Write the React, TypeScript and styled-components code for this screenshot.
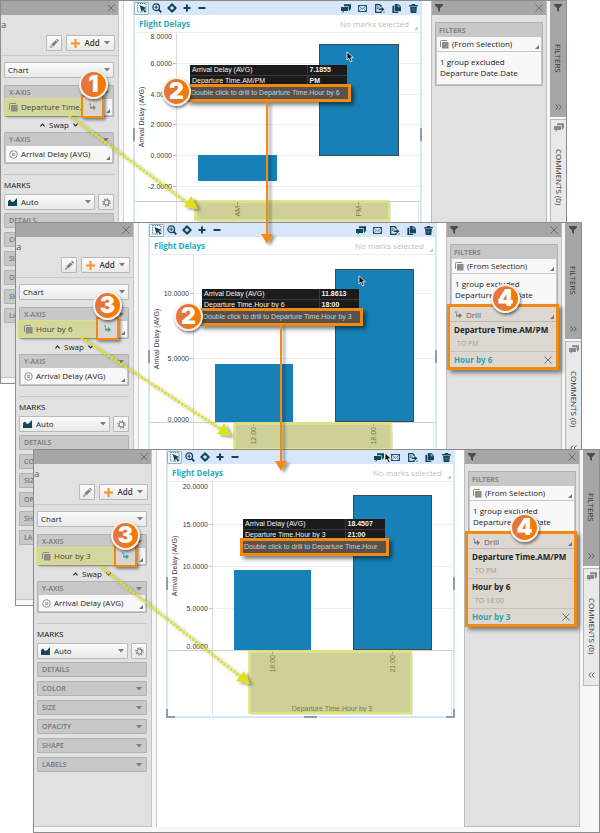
import React from "react";
import styled, { createGlobalStyle, css } from "styled-components";

const UI_FONT = '"Open Sans", "Noto Sans", sans-serif';
const CHART_FONT = '"Liberation Sans", Arial, sans-serif';
const ORANGE = "#f28a12";
const NAVY = "#12465c";
const TEAL = "#2fa3aa";

const GlobalStyle = createGlobalStyle`
  *, *::before, *::after { box-sizing: border-box; }
  body { margin: 0; background: #fff; font-family: ${UI_FONT}; font-size: 8px; line-height: 12px; color: #222; }
  button, select { font: inherit; color: inherit; margin: 0; padding: 0; border: 0; background: none; }
  svg { display: block; flex: none; }
  h2, h3, p, ul { margin: 0; padding: 0; font: inherit; list-style: none; }
`;

/* ---------- stage and windows ---------- */

const Stage = styled.main`
  display: grid;
  min-width: 600px;
  overflow: hidden;
`;

const WindowFrame = styled.section<{ $x: number; $y: number }>`
  grid-area: 1 / 1;
  position: relative;
  align-self: start;
  margin: ${(p) => p.$y}px 0 0 ${(p) => p.$x}px;
  width: calc(100% - 33px);
  height: 384px;
  display: flex;
  background: #f7f7f7;
  border: 1px solid #8c8c8c;
`;

const Arrows = styled.svg`
  grid-area: 1 / 1;
  pointer-events: none;
  z-index: 2;
`;

const PanelHeader = styled.header`
  display: flex;
  align-items: center;
  justify-content: space-between;
  height: 14px;
  padding: 0 3px;
  background: #a6a6a6;
  color: #555;
`;

const IconButton = styled.button`
  display: flex;
  align-items: center;
  justify-content: center;
`;

/* ---------- left panel ---------- */

const SidePanel = styled.aside`
  position: relative;
  width: 118px;
  height: 377px;
  flex: none;
  background: #e1e1e1;
  border-right: 1px solid #c4c4c4;
  border-bottom: 1px solid #c4c4c4;
`;

const PanelTitle = styled.h2`
  height: 20px;
  padding-top: 4px;
  font-size: 9px;
  color: #555;
  text-indent: -3px;
  overflow: hidden;
`;

const Actions = styled.div`
  display: flex;
  justify-content: flex-end;
  gap: 4px;
  height: 21px;
  padding-right: 3px;
  border-bottom: 1px solid #c9c9c9;
`;

const raised = css`
  background: linear-gradient(#fbfbfb, #e9e9e9);
  border: 1px solid #b9b9b9;
  border-radius: 1px;
`;

const SmallButton = styled.button<{ $w: number }>`
  ${raised}
  width: ${(p) => p.$w}px;
  height: 16px;
  display: flex;
  align-items: center;
  justify-content: center;
  gap: 4px;
  color: #333;
  font-weight: 600;
`;

const SelectBox = styled.label`
  ${raised}
  position: relative;
  display: flex;
  align-items: center;
  flex: 1;
  height: 16px;
  padding: 0 3px;
  gap: 4px;
`;

const Select = styled.select`
  appearance: none;
  flex: 1;
  min-width: 0;
  height: 14px;
  line-height: 12px;
`;

const Controls = styled.div`
  display: flex;
  flex-direction: column;
  padding: 6px 4px 0 3px;
`;

const Line = styled.div`
  display: flex;
  gap: 3px;
`;

const Shelf = styled.div<{ $spaced?: boolean }>`
  margin-top: ${(p) => (p.$spaced ? 7 : 0)}px;
  background: #c8c8c8;
  border: 1px solid #b2b2b2;
  border-radius: 1px;
  padding: 0 1px 1px;
`;

const ShelfHeader = styled.button`
  display: flex;
  width: 100%;
  height: 13px;
  padding: 0 3px;
  align-items: center;
  justify-content: space-between;
  font-weight: 600;
  color: #777;
  font-size: 7px;
`;

const ShelfRow = styled.div`
  position: relative;
  display: flex;
  height: 16px;
  background: #f8f8f8;
`;

const FieldButton = styled.button<{ $marked?: boolean }>`
  display: flex;
  align-items: center;
  gap: 3px;
  padding-left: 3px;
  flex: 1;
  min-width: 0;
  white-space: nowrap;
  color: #222;
  ${(p) =>
    p.$marked &&
    css`
      margin-left: -2px;
      padding-left: 5px;
      color: #454822;
      background: #d4d69f;
      box-shadow: 0 0 0 1px #dfe17e, 2px 2px 3px rgba(0, 0, 0, 0.35);
    `}
`;

const DrillButton = styled.button`
  display: flex;
  align-items: center;
  justify-content: center;
  width: 23px;
  height: 23px;
  margin: -4px 8px 0 1px;
  background: #d9d5d1;
  border: 2px solid ${ORANGE};
  box-shadow: 2px 2px 3px rgba(0, 0, 0, 0.45);
`;

const SwapButton = styled.button`
  display: flex;
  align-items: center;
  justify-content: center;
  gap: 4px;
  height: 15px;
`;

const Divider = styled.hr`
  width: 100%;
  height: 1px;
  margin: 10px 0 4px;
  border: 0;
  background: #c6c6c6;
`;

const SectionTitle = styled.h3`
  height: 15px;
  color: #111;
`;

const MarkButton = styled.button`
  display: flex;
  align-items: center;
  justify-content: space-between;
  height: 15px;
  padding: 0 4px;
  background: #c8c8c8;
  border: 1px solid #b2b2b2;
  border-radius: 1px;
  font-size: 7px;
  font-weight: 600;
  color: #777;
`;

const MarkList = styled.div`
  display: flex;
  flex-direction: column;
  gap: 4px;
  padding-top: 3px;
`;

const Corner = styled.span<{ $tone?: string }>`
  position: absolute;
  right: 2px;
  bottom: 2px;
  border: 2px solid transparent;
  border-right-color: ${(p) => p.$tone || "#777"};
  border-bottom-color: ${(p) => p.$tone || "#777"};
`;

/* ---------- centre ---------- */

const Center = styled.div`
  flex: 1;
  min-width: 0;
  height: 377px;
  margin-left: 4px;
  padding: 0 9px;
  border-left: 1px solid #cfcfcf;
  background: #fff;
`;

const ChartCard = styled.div`
  position: relative;
  height: 268px;
  border: 2px solid #d8e6f9;
  border-top: 0;
`;

const Toolbar = styled.div`
  display: flex;
  align-items: center;
  height: 14px;
  margin: 0 -2px;
  padding: 0 1px;
  background: #d8e6f9;
  color: ${NAVY};
`;

const ToolButton = styled.button<{ $active?: boolean }>`
  display: flex;
  align-items: center;
  justify-content: center;
  width: 15px;
  height: 13px;
  ${(p) => p.$active && "background:#f4f8fd;border:1px solid #8fb6c2;border-radius:1px;"}
`;

const ToolGap = styled.span`
  flex: 1;
`;

const RightTools = styled.div`
  display: flex;
  gap: 2px;
`;

const ChartHead = styled.div`
  display: flex;
  align-items: center;
  justify-content: space-between;
  height: 18px;
  padding: 1px 11px 0 4px;
  border-bottom: 1px solid #ececec;
  position: relative;
`;

const ChartTitle = styled.h3`
  font-weight: 700;
  color: #27a9b8;
`;

const Hint = styled.span`
  color: #bdbdbd;
`;

const Plot = styled.svg`
  font-family: ${CHART_FONT};
  font-size: 7px;
  fill: #3a3a3a;
`;

const Handle = styled.span<{ $at: "left" | "right" | "bottom" | "bl" | "br" }>`
  position: absolute;
  ${(p) =>
    ({
      left: "left:-2px;top:127px;width:2px;height:13px;background:#8c9fb2;",
      right: "right:-2px;top:127px;width:2px;height:13px;background:#8c9fb2;",
      bottom: "left:50%;margin-left:-7px;bottom:-2px;width:13px;height:2px;background:#8c9fb2;",
      bl: "left:-2px;bottom:-2px;width:9px;height:9px;border:solid #8c9fb2;border-width:0 0 2px 2px;",
      br: "right:-2px;bottom:-2px;width:9px;height:9px;border:solid #8c9fb2;border-width:0 2px 2px 0;",
    })[p.$at]}
`;

const Tip = styled.div<{ $x: number; $y: number; $w: number }>`
  position: absolute;
  left: ${(p) => p.$x}px;
  top: ${(p) => p.$y}px;
  width: ${(p) => p.$w}px;
  font: 7px/10px ${CHART_FONT};
  color: #f2f2f2;
`;

const TipTable = styled.table`
  width: 100%;
  border-collapse: collapse;
  background: #1b1b1b;
  th, td { height: 10px; padding: 0 2px; font-weight: 400; text-align: left; white-space: nowrap; border-bottom: 1px solid #3a3a3a; }
  td { width: 40px; font-weight: 700; border-left: 1px solid #3a3a3a; }
`;

const TipHint = styled.p`
  margin: -3px -4px 0 -3px;
  height: 18px;
  padding: 1px 0 0 1px;
  line-height: 10px;
  white-space: nowrap;
  color: #d0cbc6;
  background: #57524e;
  border: 3px solid ${ORANGE};
  box-shadow: 3px 3px 4px rgba(0, 0, 0, 0.5);
  position: relative;
`;

const PointerSvg = styled.svg<{ $x: number; $y: number }>`
  position: absolute;
  left: ${(p) => p.$x}px;
  top: ${(p) => p.$y}px;
`;

const StepBadge = styled.span<{ $x: number; $y: number }>`
  position: absolute;
  z-index: 1;
  left: ${(p) => p.$x}px;
  top: ${(p) => p.$y}px;
  width: 29px;
  height: 29px;
  border-radius: 50%;
  border: 2px solid #f7efe9;
  background: linear-gradient(100deg, #e5763a 0 48%, #f27808 60%);
  box-shadow: 1px 2px 3px rgba(0, 0, 0, 0.5);
  color: #fff;
  font: 900 23px/25px Inter, ${CHART_FONT};
  text-align: center;
`;

/* ---------- right ---------- */

const FilterPanel = styled.aside`
  position: relative;
  width: 116px;
  height: 377px;
  flex: none;
  background: #e1e1e1;
  border: 1px solid #bdbdbd;
  border-top: 0;
`;

const FilterGroup = styled.div`
  margin: 7px 3px 0;
  padding: 0 1px 1px;
  height: 64px;
  background: #c8c8c8;
  border: 1px solid #b2b2b2;
`;

const FilterCaption = styled.h3`
  height: 14px;
  padding: 2px 2px 0;
  line-height: 11px;
  font-size: 7px;
  font-weight: 700;
  color: #858585;
`;

const FilterField = styled.button`
  position: relative;
  display: flex;
  align-items: center;
  gap: 3px;
  width: 100%;
  height: 15px;
  padding: 0 3px;
  background: #f8f8f8;
  border-bottom: 1px solid #c9c9c9;
`;

const FilterText = styled.p`
  height: 32px;
  padding: 4px 3px 0;
  line-height: 11px;
  background: #f8f8f8;
`;

const DrillPath = styled.div`
  position: relative;
  margin: -4px 2px 0 0;
  border: 3px solid ${ORANGE};
  background: #ddd7d1;
  box-shadow: 3px 3px 4px rgba(0, 0, 0, 0.45);
`;

const DrillHead = styled.button`
  position: relative;
  display: flex;
  align-items: center;
  gap: 4px;
  width: 100%;
  height: 15px;
  padding: 1px 5px 0;
  border-bottom: 1px solid #bdb8b3;
  color: #5c5c5c;
`;

const DrillStep = styled.div`
  height: 30px;
  padding: 2px 4px 0;
  border-bottom: 1px solid #c6c1bc;
`;

const StepName = styled.p`
  font-weight: 700;
  white-space: nowrap;
`;

const StepValue = styled.p`
  padding: 2px 3px 0;
  font-size: 7px;
  color: #a09b96;
`;

const DrillCurrent = styled.div`
  display: flex;
  align-items: center;
  justify-content: space-between;
  height: 15px;
  padding: 0 4px;
  font-weight: 700;
  color: ${TEAL};
`;

const Tabs = styled.nav`
  display: flex;
  flex-direction: column;
  gap: 2px;
  width: 16px;
  margin-left: 3px;
  flex: none;
`;

const Tab = styled.button<{ $on?: boolean }>`
  display: flex;
  flex-direction: column;
  align-items: center;
  justify-content: space-between;
  width: 16px;
  height: ${(p) => (p.$on ? 116 : 118)}px;
  padding: 3px 0 7px;
  color: #555;
  background: ${(p) => (p.$on ? "#a6a6a6" : "#e9e9e9")};
  ${(p) => !p.$on && "border:1px solid #b9b9b9;border-right:0;"}
`;

const TabText = styled.span`
  writing-mode: vertical-rl;
  white-space: nowrap;
  line-height: 12px;
  color: #333;
`;

/* ---------- icons ---------- */

const Close = () => (
  <svg width="8" height="8" viewBox="0 0 8 8" fill="none" stroke="#666" strokeWidth=".9"><path d="M.5.5l7 7M7.500.5l-7 7" /></svg>
);
const Caret = () => (
  <svg width="6" height="4" viewBox="0 0 6 4" fill="#7c7c7c"><path d="M0 0h6L3 3.600z" /></svg>
);
const Funnel = () => (
  <svg width="8" height="8" viewBox="0 0 8 8" fill="#4d4d4d"><path d="M0 0h8v1.200L5 4.200V8L3 6.600V4.200L0 1.200z" /></svg>
);
const Chevron = ({ up }: { up?: boolean }) => (
  <svg width="5" height="4" viewBox="0 0 5 4" fill="none" stroke="#222" strokeWidth="1.100"><path d={up ? "M.4 3.400L2.500 1l2.100 2.400" : "M.4.6L2.500 3 4.600.6"} /></svg>
);
const DoubleChevron = ({ left }: { left?: boolean }) => (
  <svg width="7" height="6" viewBox="0 0 7 6" fill="none" stroke="#555" strokeWidth=".9"><path d={left ? "M3.200.4L.8 3l2.400 2.600M6.400.4L4 3l2.400 2.600" : "M.6.4L3 3 .6 5.600M3.800.4L6.200 3 3.800 5.600"} /></svg>
);
const Pencil = () => (
  <svg width="9" height="9" viewBox="0 0 9 9" fill="#808080"><path d="M0 9l.8-2.800 1.900 1.900zM1.300 5.600L5.600 1.300l2 2-4.300 4.300zM6.100.8l.6-.6c.4-.3.7-.2 1 0l1 1c.3.4.2.8 0 1l-.6.6z" /></svg>
);
const OrangePlus = () => (
  <svg width="9" height="9" viewBox="0 0 9 9" fill="#f7941e"><path d="M3.500 0h2v3.500H9v2H5.500V9h-2V5.500H0v-2h3.500z" /></svg>
);
const Stack = () => (
  <svg width="9" height="9" viewBox="0 0 9 9"><path d="M.5 7V1.500a1 1 0 0 1 1-1H7" fill="none" stroke="#8a8a80" /><rect x="2" y="2" width="6.500" height="6.500" rx=".6" fill="#8a8a80" /><path d="M3.300 3.800h4M3.300 5.300h4M3.300 6.800h4" stroke="#a6a69c" strokeWidth=".4" /></svg>
);
const Measure = () => (
  <svg width="9" height="9" viewBox="0 0 9 9" fill="none" stroke="#777" strokeWidth=".8"><circle cx="4.500" cy="4.500" r="3.800" /><path d="M2.800 3.800h3.400M2.800 5.300h3.400" /></svg>
);
const DrillIcon = ({ color = "#777" }: { color?: string }) => (
  <svg width="7" height="8" viewBox="0 0 7 8" fill={color}><path d="M0 .5h1.700v3.200h2.400V1.900L7 4.600 4.100 7.400V5.400H1V1.600H0z" /></svg>
);
const AreaIcon = () => (
  <svg width="9" height="8" viewBox="0 0 9 8" fill={NAVY}><path d="M0 8V3l2-1.500L4 4l2-.8L9 0v8z" /></svg>
);
const Gear = () => (
  <svg width="9" height="9" viewBox="0 0 10 10" fill="none" stroke="#808080"><circle cx="5" cy="5" r="2.700" strokeWidth="1.200" /><circle cx="5" cy="5" r="4" strokeWidth="1.400" strokeDasharray="1.570 1.570" /></svg>
);
const SelectTool = () => (
  <svg width="10" height="10" viewBox="0 0 10 10"><rect x=".6" y=".6" width="8.400" height="8.400" fill="none" stroke={NAVY} strokeWidth=".8" strokeDasharray="1.200 1" /><path d="M2.500 2l7 3-2.500.9 2.300 2.700-1.200 1-2.300-2.700-1.200 2.200z" fill={NAVY} /></svg>
);
const ZoomTool = () => (
  <svg width="10" height="10" viewBox="0 0 10 10" fill="none" stroke={NAVY}><circle cx="4.200" cy="4.200" r="3.300" strokeWidth="1.300" /><path d="M6.500 6.500L9.300 9.300" strokeWidth="1.800" /><path d="M2.500 4.200h3.400M4.200 2.500v3.400" strokeWidth="1" /></svg>
);
const PanTool = () => (
  <svg width="10" height="10" viewBox="0 0 10 10"><circle cx="5" cy="5" r="2.700" fill="none" stroke={NAVY} strokeWidth="1.800" /><path d="M5 0l2 2H3zM5 10l2-2H3zM0 5l2-2v4zM10 5L8 3v4z" fill={NAVY} /></svg>
);
const PlusTool = () => (
  <svg width="8" height="8" viewBox="0 0 8 8" fill={NAVY}><path d="M3 .5h2V3h2.500v2H5v2.500H3V5H.5V3H3z" /></svg>
);
const MinusTool = () => (
  <svg width="8" height="8" viewBox="0 0 8 8" fill={NAVY}><path d="M.5 3h7v2h-7z" /></svg>
);
const Chat = ({ color = NAVY }: { color?: string }) => (
  <svg width="10" height="9" viewBox="0 0 10 9" fill={color}><path d="M3 .3h7v5h-.8L8.700 7l-1-1.600V2.300H3z" /><path d="M0 2.900h7v4.200H3.200L1.700 9V7.100H0z" /></svg>
);
const Mail = () => (
  <svg width="9" height="7" viewBox="0 0 9 7" fill="none" stroke={NAVY} strokeWidth=".9"><rect x=".5" y=".5" width="8" height="6" /><path d="M.5.8l4 3.200 4-3.200M.6 6.300l2.800-3M8.400 6.300l-2.800-3" strokeWidth=".6" /></svg>
);
const Export = () => (
  <svg width="10" height="9" viewBox="0 0 10 9"><path d="M6 3V2L4.600.6H.7v7.800H6V7" fill="none" stroke={NAVY} strokeWidth="1.300" /><path d="M2 3h2.500M2 4.500h1" stroke={NAVY} strokeWidth=".8" /><path d="M3.500 4.500h3V2.800l3 2.500-3 2.500V6.100h-3zM8 7.800h2L9 9z" fill={NAVY} /></svg>
);
const Copy = () => (
  <svg width="9" height="9" viewBox="0 0 9 9" fill={NAVY}><path d="M2.800 0h3.500L9 2.400V7.200H2.800z" /><path d="M.4 1.800h1.800v6h4V9H.4z" /><path d="M6 .3v2.500h2.500" fill="none" stroke="#d8e6f9" strokeWidth=".6" /></svg>
);
const Trash = () => (
  <svg width="9" height="9" viewBox="0 0 9 9" fill={NAVY}><path d="M.2 1h2.600V0h3.400v1h2.600v1.500H.2zM1.100 3.100h6.800L7.300 9H1.700z" /><path d="M3.100 4.400v3M4.500 4.400v3M5.900 4.400v3" stroke="#7f9db0" strokeWidth=".4" /></svg>
);

const Pointer = ({ x, y }: { x: number; y: number }) => (
  <PointerSvg $x={x} $y={y} width="9" height="12" viewBox="0 0 9 12">
    <path d="M1 .8v8.200l1.900-1.700 1.500 3.600 1.700-.7-1.500-3.500H7.300z" fill="#111" stroke="#fff" strokeWidth=".8" />
  </PointerSvg>
);

/* ---------- data ---------- */

type Bar = { x: number; y: number; w: number; h: number; picked?: boolean };
type Scene = {
  x: number;
  y: number;
  field: string;
  drillColor: string;
  axisX: number;
  base: number;
  ticks: { y: number; text: string; shift?: number; bare?: boolean }[];
  bars: Bar[];
  cats: { x: number; text: string }[];
  mark: { x: number; y: number; w: number; h: number };
  axisName?: string;
  tip: { x: number; y: number; w: number; label: string; values: [string, string]; hint: string };
  pointer: [number, number];
  badges: { n: number; x: number; y: number }[];
  steps: { name: string; value: string }[];
};

const scenes: Scene[] = [
  {
    x: 0, y: 0, field: "Departure Time....", drillColor: "#888", axisX: 41, base: 168,
    ticks: [
      { y: 3, text: "8.0000", bare: true }, { y: 30, text: "6.0000" }, { y: 61, text: "4.0000" },
      { y: 91, text: "2.0000" }, { y: 122, text: "0.0000" }, { y: 153, text: "-2.0000" },
    ],
    bars: [{ x: 63, y: 122, w: 79, h: 26 }, { x: 184, y: 11, w: 80, h: 112, picked: true }],
    cats: [{ x: 102, text: "AM" }, { x: 223, text: "PM" }],
    mark: { x: 60, y: 168, w: 194, h: 19 },
    tip: { x: 55, y: 64, w: 157, label: "Departure Time.AM/PM", values: ["7.1855", "PM"], hint: "Double click to drill to Departure Time.Hour by 6" },
    pointer: [211, 50],
    badges: [{ n: 1, x: 78, y: 69 }, { n: 2, x: 161, y: 76 }],
    steps: [],
  },
  {
    x: 15, y: 222, field: "Hour by 6", drillColor: TEAL, axisX: 43, base: 167,
    ticks: [{ y: 38, text: "10.0000" }, { y: 103, text: "5.0000" }, { y: 167, text: "0.0000", shift: -3 }],
    bars: [{ x: 65, y: 109, w: 78, h: 58 }, { x: 185, y: 14, w: 79, h: 153, picked: true }],
    cats: [{ x: 103, text: "12:00" }, { x: 223, text: "18:00" }],
    mark: { x: 84, y: 168, w: 157, h: 26 },
    tip: { x: 52, y: 66, w: 157, label: "Departure Time.Hour by 6", values: ["11.8613", "18:00"], hint: "Double click to drill to Departure Time.Hour by 3" },
    pointer: [208, 52],
    badges: [{ n: 3, x: 77, y: 68 }, { n: 2, x: 158, y: 79 }, { n: 4, x: 475, y: 61 }],
    steps: [{ name: "Departure Time.AM/PM", value: "TO PM" }],
  },
  {
    x: 33, y: 449, field: "Hour by 3", drillColor: TEAL, axisX: 44, base: 168,
    ticks: [
      { y: 4, text: "20.0000", bare: true }, { y: 42, text: "15.0000" }, { y: 84, text: "10.0000" },
      { y: 126, text: "5.0000" }, { y: 168, text: "0.0000", shift: -4 },
    ],
    bars: [{ x: 66, y: 88, w: 77, h: 80 }, { x: 185, y: 13, w: 79, h: 155, picked: true }],
    cats: [{ x: 104, text: "18:00" }, { x: 224, text: "21:00" }],
    mark: { x: 81, y: 169, w: 162, h: 62 },
    axisName: "Departure Time.Hour by 3",
    tip: { x: 75, y: 69, w: 142, label: "Departure Time.Hour by 3", values: ["18.4507", "21:00"], hint: "Double click to drill to Departure Time.Hour" },
    pointer: [216, 2],
    badges: [{ n: 3, x: 77, y: 71 }, { n: 4, x: 476, y: 63 }],
    steps: [{ name: "Departure Time.AM/PM", value: "TO PM" }, { name: "Hour by 6", value: "TO 18:00" }],
  },
];

const marks = ["DETAILS", "COLOR", "SIZE", "OPACITY", "SHAPE", "LABELS"];

/* ---------- parts ---------- */

function Config({ scene }: { scene: Scene }) {
  return (
    <SidePanel>
      <PanelHeader>
        <span />
        <IconButton aria-label="Close panel"><Close /></IconButton>
      </PanelHeader>
      <PanelTitle>ta</PanelTitle>
      <Actions>
        <SmallButton $w={16} aria-label="Edit"><Pencil /></SmallButton>
        <SmallButton $w={49}><OrangePlus />Add<Caret /></SmallButton>
      </Actions>
      <Controls>
        <SelectBox>
          <Select aria-label="Visualization"><option>Chart</option></Select>
          <Caret />
        </SelectBox>
        <Shelf $spaced>
          <ShelfHeader>X-AXIS<Caret /></ShelfHeader>
          <ShelfRow>
            <FieldButton $marked><Stack />{scene.field}</FieldButton>
            <DrillButton aria-label="Drill"><DrillIcon color={scene.drillColor} /></DrillButton>
            <Corner />
          </ShelfRow>
        </Shelf>
        <SwapButton><Chevron up />Swap<Chevron /></SwapButton>
        <Shelf>
          <ShelfHeader>Y-AXIS<Caret /></ShelfHeader>
          <ShelfRow>
            <FieldButton><Measure />Arrival Delay (AVG)</FieldButton>
            <Corner />
          </ShelfRow>
        </Shelf>
        <Divider />
        <SectionTitle>MARKS</SectionTitle>
        <Line>
          <SelectBox>
            <AreaIcon />
            <Select aria-label="Mark type"><option>Auto</option></Select>
            <Caret />
          </SelectBox>
          <SmallButton $w={16} aria-label="Mark settings"><Gear /></SmallButton>
        </Line>
        <MarkList>
          {marks.map((m, i) => (
            <MarkButton key={m}>{m}{i > 0 && <Caret />}</MarkButton>
          ))}
        </MarkList>
      </Controls>
    </SidePanel>
  );
}

function Chart({ scene }: { scene: Scene }) {
  const { axisX, base, mark, tip } = scene;
  return (
    <Center>
      <ChartCard>
        <Toolbar>
          <ToolButton $active aria-label="Select"><SelectTool /></ToolButton>
          <ToolButton aria-label="Zoom"><ZoomTool /></ToolButton>
          <ToolButton aria-label="Pan"><PanTool /></ToolButton>
          <ToolButton aria-label="Zoom in"><PlusTool /></ToolButton>
          <ToolButton aria-label="Zoom out"><MinusTool /></ToolButton>
          <ToolGap />
          <RightTools>
            <ToolButton aria-label="Comments"><Chat /></ToolButton>
            <ToolButton aria-label="Mail"><Mail /></ToolButton>
            <ToolButton aria-label="Export"><Export /></ToolButton>
            <ToolButton aria-label="Copy"><Copy /></ToolButton>
            <ToolButton aria-label="Delete"><Trash /></ToolButton>
          </RightTools>
        </Toolbar>
        <ChartHead>
          <ChartTitle>Flight Delays</ChartTitle>
          <Hint>No marks selected</Hint>
          <Corner $tone="#c8c8c8" />
        </ChartHead>
        <Plot width="100%" viewBox="0 0 285 233">
          {scene.ticks.map((t) => (
            <g key={t.text}>
              {!t.bare && <path d={`M${axisX} ${t.y + 0.5}H285`} stroke="#eeeeee" />}
              {!t.bare && <path d={`M${axisX - 3} ${t.y + 0.5}H${axisX}`} stroke="#bbb" />}
              <text x={axisX - 4} y={t.y + 3 + (t.shift || 0)} textAnchor="end">{t.text}</text>
            </g>
          ))}
          <path d={`M${axisX + 0.5} 0V233`} stroke="#dcdcdc" />
          <path d={`M0 ${base + 0.5}H285`} stroke="#cfcfcf" />
          <path d={`M283.500 ${base}V233`} stroke="#e4e4e4" />
          <text transform="translate(9 84) rotate(-90)" textAnchor="middle">Arrival Delay (AVG)</text>
          {scene.bars.map((b) => (
            <rect key={b.x} x={b.x + 0.5} y={b.y + 0.5} width={b.w - 1} height={b.h - 1} fill="#1780b6" stroke={b.picked ? "#3c4b54" : "#1780b6"} />
          ))}
          {scene.cats.map((c) => (
            <g key={c.text}>
              <path d={`M${c.x + 0.5} ${base + 1}v3`} stroke="#999" />
              <text transform={`translate(${c.x + 3} ${base + 5}) rotate(-90)`} textAnchor="end">{c.text}</text>
            </g>
          ))}
          {scene.axisName && <text x="164" y="229" textAnchor="middle">{scene.axisName}</text>}
          <rect x={mark.x + 2} y={mark.y + 2} width={mark.w} height={mark.h} fill="#000" opacity=".1" />
          <rect x={mark.x} y={mark.y} width={mark.w} height={mark.h} fill="#b9bc4c" fillOpacity=".5" stroke="#e2e56c" strokeOpacity=".8" strokeWidth="2" />
        </Plot>
        <Handle $at="left" />
        <Handle $at="right" />
        <Handle $at="bottom" />
        <Handle $at="bl" />
        <Handle $at="br" />
        <Tip $x={tip.x} $y={tip.y} $w={tip.w}>
          <TipTable>
            <tbody>
              <tr><th scope="row">Arrival Delay (AVG)</th><td>{tip.values[0]}</td></tr>
              <tr><th scope="row">{tip.label}</th><td>{tip.values[1]}</td></tr>
            </tbody>
          </TipTable>
          <TipHint>{tip.hint}</TipHint>
        </Tip>
        <Pointer x={scene.pointer[0]} y={scene.pointer[1]} />
      </ChartCard>
    </Center>
  );
}

function Filters({ scene }: { scene: Scene }) {
  return (
    <FilterPanel>
      <PanelHeader>
        <Funnel />
        <IconButton aria-label="Close filters"><Close /></IconButton>
      </PanelHeader>
      <FilterGroup>
        <FilterCaption>FILTERS</FilterCaption>
        <FilterField><Stack />(From Selection)<Corner /></FilterField>
        <FilterText>1 group excluded<br />Departure Date.Date</FilterText>
      </FilterGroup>
      {scene.steps.length > 0 && (
        <DrillPath>
          <DrillHead><DrillIcon />Drill<Corner /></DrillHead>
          {scene.steps.map((s) => (
            <DrillStep key={s.name}>
              <StepName>{s.name}</StepName>
              <StepValue>{s.value}</StepValue>
            </DrillStep>
          ))}
          <DrillCurrent>
            {scene.field}
            <IconButton aria-label="Remove drill"><Close /></IconButton>
          </DrillCurrent>
        </DrillPath>
      )}
    </FilterPanel>
  );
}

function AppWindow({ scene }: { scene: Scene }) {
  return (
    <WindowFrame $x={scene.x} $y={scene.y}>
      <Config scene={scene} />
      <Chart scene={scene} />
      <Filters scene={scene} />
      <Tabs>
        <Tab $on><Funnel /><TabText>FILTERS</TabText><DoubleChevron /></Tab>
        <Tab><Chat color="#888" /><TabText>COMMENTS (0)</TabText><DoubleChevron left /></Tab>
      </Tabs>
      {scene.badges.map((b) => (
        <StepBadge key={b.n} $x={b.x} $y={b.y}>{b.n}</StepBadge>
      ))}
    </WindowFrame>
  );
}

const dotted = [
  { from: [70, 116], to: [186, 202], tip: "M198 209L184 207 191 196z" },
  { from: [82, 338], to: [222, 430], tip: "M231 436L217 434 224 423z" },
  { from: [102, 568], to: [241, 677], tip: "M250 684L236 681 244 671z" },
];

const drops = [
  { x: 267, top: 102, bottom: 234 },
  { x: 281, top: 325, bottom: 461 },
];

export default function App() {
  return (
    <Stage>
      <GlobalStyle />
      {scenes.map((s) => (
        <AppWindow key={s.field} scene={s} />
      ))}
      <Arrows width="600" height="833" viewBox="0 0 600 833" aria-hidden="true">
        <defs>
          <filter id="soft" x="0" y="0" width="600" height="833" filterUnits="userSpaceOnUse">
            <feDropShadow dx="3" dy="2" stdDeviation="1.500" floodColor="#000" floodOpacity=".4" />
          </filter>
        </defs>
        <g filter="url(#soft)">
          {dotted.map((d) => (
            <g key={d.tip}>
              <path d={`M${d.from[0]} ${d.from[1]}L${d.to[0]} ${d.to[1]}`} stroke="#dde11c" strokeWidth="3" strokeLinecap="round" strokeDasharray="0 4" />
              <path d={d.tip} fill="#dde11c" />
            </g>
          ))}
          {drops.map((d) => (
            <g key={d.x} fill={ORANGE}>
              <rect x={d.x - 1} y={d.top} width="2" height={d.bottom - d.top} />
              <path d={`M${d.x - 6} ${d.bottom}h12l-6 10z`} />
            </g>
          ))}
        </g>
      </Arrows>
    </Stage>
  );
}
